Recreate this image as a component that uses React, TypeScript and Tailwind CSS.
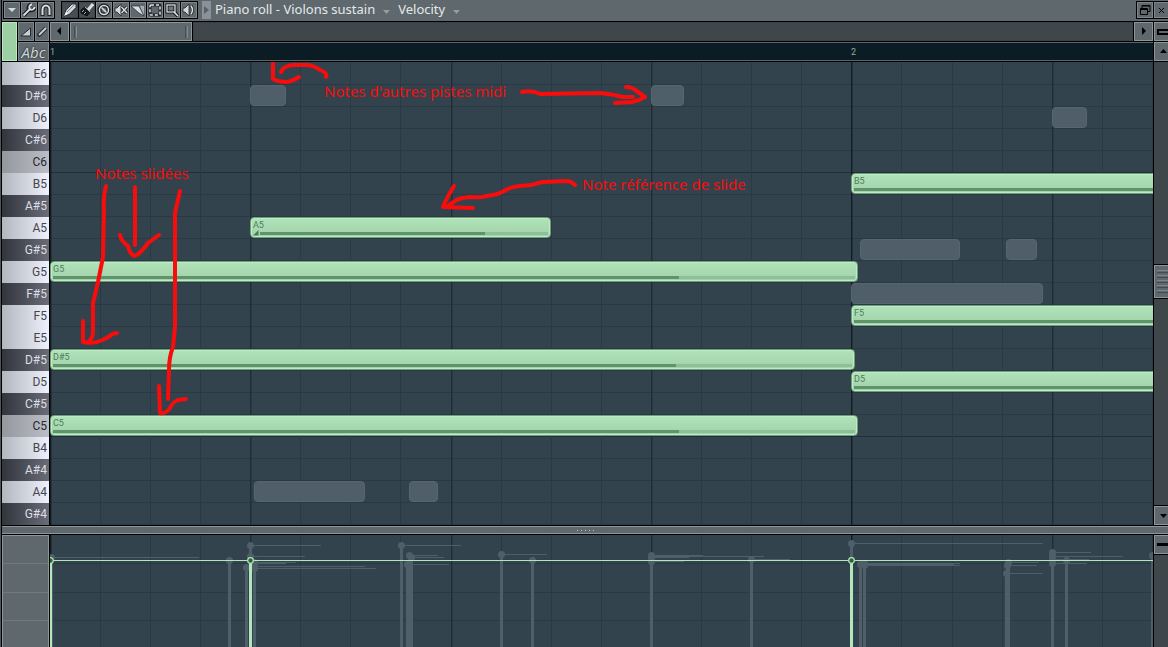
import { ReactNode } from 'react';

type Note = {
  key: string
  left: number
  width: number
  level: number
  slide?: boolean
};

type Ghost = {
  key: string
  left: number
  width: number
};

type Handle = {
  x: number
  y: number
  tail: number
};

const KEYS = [
  'E6', 'D#6', 'D6', 'C#6', 'C6', 'B5', 'A#5', 'A5', 'G#5', 'G5', 'F#5',
  'F5', 'E5', 'D#5', 'D5', 'C#5', 'C5', 'B4', 'A#4', 'A4', 'G#4',
];

const ROW = 22;
const STEP = 50.1;

const NOTES: Note[] = [
  { key: 'B5', left: 801, width: 1200, level: 1100 },
  {
    key: 'A5', left: 200, width: 301, level: 225, slide: true,
  },
  { key: 'G5', left: 0, width: 808, level: 626 },
  { key: 'F5', left: 801, width: 1200, level: 1100 },
  { key: 'D#5', left: 0, width: 805, level: 623 },
  { key: 'D5', left: 801, width: 1200, level: 1100 },
  { key: 'C5', left: 0, width: 808, level: 626 },
];

const GHOSTS: Ghost[] = [
  { key: 'D#6', left: 200, width: 36 },
  { key: 'D#6', left: 601, width: 33 },
  { key: 'D6', left: 1002, width: 35 },
  { key: 'G#5', left: 810, width: 100 },
  { key: 'G#5', left: 956, width: 31 },
  { key: 'F#5', left: 801, width: 192 },
  { key: 'A4', left: 204, width: 111 },
  { key: 'A4', left: 359, width: 29 },
];

const GHOST_HANDLES: Handle[] = [
  { x: 1, y: 22, tail: 148 },
  { x: 179, y: 25, tail: 0 },
  { x: 196, y: 32, tail: 0 },
  { x: 200, y: 10, tail: 71 },
  { x: 200, y: 21, tail: 55 },
  { x: 204, y: 27, tail: 42 },
  { x: 204, y: 28, tail: 32 },
  { x: 204, y: 31, tail: 111 },
  { x: 204, y: 33, tail: 122 },
  { x: 351, y: 10, tail: 60 },
  { x: 357, y: 29, tail: 42 },
  { x: 359, y: 20, tail: 29 },
  { x: 361, y: 22, tail: 33 },
  { x: 451, y: 19, tail: 46 },
  { x: 482, y: 25, tail: 0 },
  { x: 601, y: 20, tail: 52 },
  { x: 601, y: 21, tail: 113 },
  { x: 601, y: 22, tail: 38 },
  { x: 601, y: 26, tail: 33 },
  { x: 701, y: 24, tail: 39 },
  { x: 801, y: 8, tail: 192 },
  { x: 810, y: 29, tail: 94 },
  { x: 814, y: 28, tail: 96 },
  { x: 814, y: 30, tail: 96 },
  { x: 956, y: 38, tail: 37 },
  { x: 957, y: 30, tail: 30 },
  { x: 958, y: 27, tail: 31 },
  { x: 1002, y: 17, tail: 39 },
  { x: 1002, y: 21, tail: 71 },
  { x: 1002, y: 24, tail: 37 },
  { x: 1002, y: 28, tail: 35 },
  { x: 1016, y: 25, tail: 0 },
  { x: 1102, y: 20, tail: 0 },
];

const STROKES = [
  'M273 60L273 79Q279 82 287 82Q293 81 299 77',
  'M281 72Q283 66 293 65L308 65Q315 66 320 70Q328 73 326 77',
  'M522 92Q532 90 540 94L600 93Q612 94 623 97L633 97',
  'M626 87Q633 87 638 92L645 97Q638 101 632 102L615 103',
  'M575 185Q571 181 567 181L543 182Q537 183 532 185L520 186Q510 187 504 191Q497 195 487 196Q480 198 470 197Q459 198 455 201L448 206',
  'M454 186L447 198L443 207L473 208',
  'M106 186Q103 198 104 208L103 257L98 282L93 303L93 331Q93 338 89 341',
  'M83 321L83 342Q93 344 100 341Q108 338 111 335Q114 333 117 333',
  'M135 187L135 245',
  'M120 235Q121 241 128 246Q130 255 135 256Q140 254 148 243L159 235',
  'M180 191L175 213L175 327L173 347Q169 357 169 370L168 399',
  'M159 386L160 413Q166 414 170 408Q173 402 178 400L186 399',
];

function keyTone(name: string) {
  if (name.includes('#')) return 'from-[#32353c] to-[#6a6d78] text-[#dcdee6]';
  if (name.startsWith('C')) return 'from-[#94979c] to-[#bcbec8] text-[#26282e]';
  return 'from-[#b2b7be] to-[#eff1fc] text-[#43464e]';
}

function noteTop(name: string) {
  return 1 + KEYS.indexOf(name) * ROW;
}

function ToolButton({ label, active, children }: { label: string, active?: boolean, children?: ReactNode }) {
  return (
    <button
      type="button"
      aria-label={label}
      className={`flex h-4 w-4 shrink-0 items-center justify-center border ${active ? 'border-[#3e464b] bg-[#464e53]' : 'border-[#7d878b] bg-[#5f686d]'}`}
    >
      <svg width="14" height="14" viewBox="0 0 14 14" className="shrink-0" fill="none" stroke="#d9dee2">{children}</svg>
    </button>
  );
}

function ArrowButton({ label, path, className }: { label: string, path: string, className: string }) {
  return (
    <button
      type="button"
      aria-label={label}
      className={`flex h-[19px] shrink-0 items-center justify-center overflow-hidden border border-[#8c9598] bg-[#5f686d] ${className}`}
    >
      <svg width="9" height="9" viewBox="0 0 9 9" className="shrink-0"><path d={path} fill="#000" /></svg>
    </button>
  );
}

function TitleMenu({ children }: { children: ReactNode }) {
  return (
    <button type="button" className="flex items-center gap-2 whitespace-nowrap">
      {children}
      <svg width="7" height="4" viewBox="0 0 7 4" className="mt-1"><path d="M0 0H7L3.5 4Z" fill="#949ca2" /></svg>
    </button>
  );
}

function Toolbar() {
  return (
    <header className="flex h-[21px] shrink-0 items-start bg-[#5f686d] pt-px">
      <div className="ml-px flex gap-px bg-black p-px">
        <ToolButton label="Menu"><path d="M3 5H11L7 9Z" fill="#d3d8dc" stroke="none" /></ToolButton>
        <ToolButton label="Tools">
          <path d="M1.5 12.5L8 6" stroke="#15181a" strokeWidth="4" />
          <path d="M9 1.5A3.5 3.5 0 0 0 7 6.5A3.5 3.5 0 0 0 12.5 5" stroke="#15181a" strokeWidth="4" />
          <path d="M1.5 12.5L8 6" strokeWidth="2" />
          <path d="M10 1.5A2.7 2.7 0 0 0 8 6A2.7 2.7 0 0 0 12.5 4" strokeWidth="2" />
        </ToolButton>
        <ToolButton label="Snap">
          <path d="M3.5 13V6.5A3.5 4 0 0 1 10.5 6.5V13" stroke="#222" strokeWidth="4" />
          <path d="M3.5 12V6.5A3.5 4 0 0 1 10.5 6.5V12" strokeWidth="2" />
        </ToolButton>
      </div>
      <div className="ml-[6px] flex gap-px bg-black p-px">
        <ToolButton label="Draw" active>
          <path d="M1 13L3 7L9 1H13V5L7 11Z" fill="#d3d8dc" stroke="#15181a" strokeWidth=".8" />
          <path d="M4 9L11 2" stroke="#7b858b" />
          <path d="M6 11L12 5" stroke="#8d969b" />
          <path d="M1 13L3 9L5 11Z" fill="#fff" stroke="none" />
        </ToolButton>
        <ToolButton label="Paint" active>
          <path d="M8 7L13 1" strokeWidth="3" />
          <path d="M1 7L5 4L10 9L7 13L1 10Z" fill="#15181a" stroke="#111" />
          <path d="M5 4L10 9M2 9L4 7M4 11L6 9" stroke="#a6afb5" />
        </ToolButton>
        <ToolButton label="Delete">
          <circle cx="7" cy="7" r="4.5" stroke="#1c2022" strokeWidth="4" />
          <circle cx="7" cy="7" r="4.5" strokeWidth="1.5" />
          <path d="M4.5 4.5L9.5 9.5" strokeWidth="1.5" />
        </ToolButton>
        <ToolButton label="Mute">
          <path d="M1 5H3L7 1V13L3 9H1Z" fill="#d3d8dc" stroke="#222" strokeWidth=".8" />
          <path d="M7.5 4L13 10M13 4L7.5 10" stroke="#222" strokeWidth="3" />
          <path d="M7.5 4L13 10M13 4L7.5 10" strokeWidth="1.4" />
        </ToolButton>
        <ToolButton label="Slice">
          <path d="M0 3H8L13 13L8 10Z" fill="#d9dee2" stroke="#22282b" strokeWidth=".7" />
          <path d="M9 3H13V12Z" fill="#a7afb4" stroke="none" />
        </ToolButton>
        <ToolButton label="Select">
          <rect x="2" y="2" width="10" height="10" rx="1" stroke="#20282c" strokeWidth="3" />
          <rect x="2" y="2" width="10" height="10" rx="1" strokeDasharray="3 2" strokeWidth="1.5" />
        </ToolButton>
        <ToolButton label="Zoom">
          <rect x="2" y="2" width="8" height="7" fill="#70777b" stroke="#111" strokeWidth="3" />
          <path d="M9 9L13 13" stroke="#111" strokeWidth="3.5" />
          <rect x="2" y="2" width="8" height="7" strokeWidth="1.3" />
          <path d="M9 9L13 13" strokeWidth="1.7" />
        </ToolButton>
        <ToolButton label="Playback">
          <path d="M1 5H3L7 1V13L3 9H1Z" fill="#d3d8dc" stroke="#222" strokeWidth=".8" />
          <path d="M9 3Q12 7 9 11" stroke="#222" strokeWidth="3" />
          <path d="M9 3Q12 7 9 11" strokeWidth="1.5" />
        </ToolButton>
      </div>
      <button type="button" aria-label="Expand" className="ml-1 flex h-[18px] w-[9px] shrink-0 items-center justify-center bg-[#8a9199]">
        <svg width="5" height="8" viewBox="0 0 5 8"><path d="M0 0L5 4L0 8Z" fill="#596168" /></svg>
      </button>
      <h1 className="ml-1 flex min-w-0 flex-1 gap-2 overflow-hidden font-['Noto_Sans','Open_Sans',sans-serif] text-[13px] leading-[17px] text-[#e4e8ea]">
        <TitleMenu>Piano roll - Violons sustain</TitleMenu>
        <TitleMenu>Velocity</TitleMenu>
      </h1>
      <div className="flex shrink-0 gap-px bg-black py-px pl-px">
        <ToolButton label="Restore">
          <g stroke="#000">
            <path d="M4 5V2.5H12V8.5H10M4 3H12" />
            <path d="M2.5 5.5H9.5V11.5H2.5ZM2 6.5H10" />
          </g>
        </ToolButton>
        <button type="button" aria-label="Close" className="flex h-4 w-[14px] items-center justify-center border border-r-0 border-[#7d878b] bg-[#5f686d]">
          <svg width="7" height="7" viewBox="0 0 7 7"><path d="M1 1L6 6M6 1L1 6" stroke="#000" /></svg>
        </button>
      </div>
    </header>
  );
}

function TimeBar() {
  return (
    <div className="flex shrink-0 gap-px">
      <div className="flex w-[47px] shrink-0 gap-px">
        <div className="w-[15px] border border-[#b9e9bf] bg-[#9ccfa3]" />
        <div className="flex flex-1 flex-col gap-px">
          <div className="flex gap-px">
            <button type="button" aria-label="Slide" className="flex h-[19px] w-4 items-center justify-center border border-[#7d878b] bg-[#5f686d]">
              <svg width="12" height="10" viewBox="0 0 12 10"><path d="M1 9L10.5 1V9Z" fill="#c8ced2" stroke="#22282b" /></svg>
            </button>
            <button type="button" aria-label="Portamento" className="flex h-[19px] w-[14px] items-center justify-center border border-[#7d878b] bg-[#5f686d]">
              <svg width="11" height="10" viewBox="0 0 11 10">
                <path d="M1 9L9 1" stroke="#22282b" strokeWidth="4" />
                <path d="M2 8L9 1" stroke="#c8ced2" strokeWidth="2" />
              </svg>
            </button>
          </div>
          <button type="button" className="h-[19px] border border-[#7d878b] bg-[#5f686d] text-center font-['Open_Sans',sans-serif] text-[15px] leading-4 text-[#d3d8dc] italic [text-shadow:0_0_2px_#111]">
            Abc
          </button>
        </div>
      </div>
      <div className="flex min-w-0 flex-1 flex-col gap-px">
        <div className="flex gap-px">
          <ArrowButton label="Scroll left" path="M6 0V8L2 4Z" className="w-[19px]" />
          <div className="flex h-[19px] w-[122px] items-center justify-between border border-[#8c9598] bg-[#5f686d] px-[3px]">
            <span className="h-3 w-[3px] border-x border-x-[#464e53] border-r-[#828b90]" />
            <span className="h-3 w-[3px] border-x border-x-[#464e53] border-r-[#828b90]" />
          </div>
          <div className="flex-1 border border-[#394246] bg-[#40474b]" />
          <ArrowButton label="Scroll right" path="M3 0L7 4L3 8Z" className="w-[19px]" />
        </div>
        <div className="relative h-[19px] overflow-hidden border-y border-[#54646a] bg-[#0b1c25] font-['Roboto',sans-serif] text-[9px] leading-[18px] text-[#99a6ac]">
          <span className="absolute left-0">1</span>
          <span className="absolute left-[801px]">2</span>
        </div>
      </div>
      <div className="flex w-[14px] shrink-0 flex-col gap-px">
        <button type="button" aria-label="Zoom" className="flex h-[19px] items-center justify-end border border-r-0 border-[#8c9598] bg-[#5f686d]">
          <span className="h-[6px] w-[11px] border-2 border-r-0 border-black" />
        </button>
        <ArrowButton label="Scroll up" path="M1 6H8L4.5 2Z" className="w-full border-r-0 pl-1" />
      </div>
    </div>
  );
}

function GridColumns() {
  return (
    <>
      {Array.from({ length: 64 }, (_, i) => {
        const x = Math.floor(i * STEP + 0.2);
        let fill = '#2a3943';
        if (i % 4 === 0) fill = '#1f2d36';
        if (i % 16 === 0) fill = '#101d25';
        return (
          <g key={x} fill={fill}>
            <rect x={x} y="0" width="1" height="2000" />
            {i % 4 === 0 && <rect x={x + 1} y="0" width="1" height="2000" opacity="0.4" />}
          </g>
        );
      })}
    </>
  );
}

function Keyboard() {
  return (
    <div className="flex w-[47px] shrink-0 flex-col font-['Roboto',sans-serif] text-xs">
      {KEYS.map((name) => (
        <div
          key={name}
          className={`flex h-[22px] items-center justify-end bg-gradient-to-r pr-[2px] first:h-[23px] ${keyTone(name)}`}
        >
          {name}
        </div>
      ))}
    </div>
  );
}

function NoteBlock({ note }: { note: Note }) {
  return (
    <div
      className="absolute flex h-[21px] flex-col justify-between overflow-hidden rounded-[4px] border border-[#6f9d7c] bg-gradient-to-b from-[#b1e3ba] to-[#a0d1a9] pb-px shadow-[inset_0_0_0_1px_#b9efc0]"
      style={{ top: noteTop(note.key), left: note.left, width: note.width }}
    >
      <span className="pl-[2px] font-['Roboto',sans-serif] text-[9px] leading-[14px] text-[#4c7d5a]">{note.key}</span>
      <div className="mx-[2px] flex h-[4px] items-start gap-px">
        {note.slide && <svg width="6" height="6" viewBox="0 0 6 6" className="-mt-[2px] shrink-0"><path d="M0 5.5L5.5 0V5.5Z" fill="#4c7d5a" /></svg>}
        <div className="h-[3px] flex-1 bg-[#8fbf99]">
          <div className="h-full bg-[#60926c]" style={{ width: note.level }} />
        </div>
      </div>
    </div>
  );
}

function Annotations() {
  return (
    <div className="pointer-events-none absolute inset-0 font-['Noto_Sans','Open_Sans',sans-serif] text-[15px] leading-[18px] whitespace-nowrap text-[#f80c0c]">
      <svg className="absolute inset-0 h-full w-full" fill="none" stroke="#f80c0c" strokeWidth="4" strokeLinecap="round" strokeLinejoin="round">
        <g transform="translate(-50 -62)">
          {STROKES.map((d) => <path key={d} d={d} />)}
        </g>
      </svg>
      <p className="absolute top-[20px] left-[274px]">Notes d&apos;autres pistes midi</p>
      <p className="absolute top-[102px] left-[45px]">Notes slidées</p>
      <p className="absolute top-[113px] left-[532px]">Note référence de slide</p>
    </div>
  );
}

function Roll() {
  return (
    <div className="relative min-w-0 flex-1 overflow-hidden bg-[#33434d]">
      <svg className="absolute inset-0 h-full w-full" shapeRendering="crispEdges">
        {KEYS.map((name, i) => (
          <rect key={name} x="0" y={(i + 1) * ROW} width="100%" height="1" fill={name.startsWith('C') && !name.includes('#') ? '#1f2e37' : '#2a3943'} />
        ))}
        <GridColumns />
      </svg>
      {GHOSTS.map((ghost) => (
        <div
          key={`${ghost.key}-${ghost.left}`}
          className="absolute h-[21px] rounded-[4px] border border-[#56666f] bg-[#52626b]/90"
          style={{ top: noteTop(ghost.key), left: ghost.left, width: ghost.width }}
        />
      ))}
      {NOTES.map((note) => <NoteBlock key={note.key} note={note} />)}
      <Annotations />
    </div>
  );
}

function VerticalScroll() {
  return (
    <div className="flex w-[14px] shrink-0 flex-col gap-px">
      <div className="flex-[202] bg-[#40474b]" />
      <div className="flex h-[33px] flex-col justify-center gap-[2px] border border-r-0 border-[#8c9598] bg-[#5f686d] pl-[2px]">
        {[0, 1, 2, 3, 4].map((line) => <span key={line} className="h-[3px] border-y border-t-[#7d878b] border-b-[#434b50]" />)}
      </div>
      <div className="flex-[207] bg-[#40474b]" />
      <ArrowButton label="Scroll down" path="M1 3H8L4.5 7Z" className="w-full border-r-0 pl-1" />
    </div>
  );
}

function Splitter() {
  return (
    <div className="flex h-2 shrink-0 items-center justify-center gap-[3px] border-y border-[#8c9598] bg-[#5f686d]">
      {[0, 1, 2, 3, 4].map((dot) => <span key={dot} className="h-px w-px bg-[#b7c0c4]" />)}
    </div>
  );
}

function VelocityLane() {
  return (
    <div className="flex min-h-[113px] flex-1 gap-px">
      <div className="w-[47px] shrink-0 border border-b-0 border-[#8c9598] bg-[#5f686d]">
        <svg className="h-full w-full" shapeRendering="crispEdges">
          {[27, 56, 84].map((y) => <rect key={y} x="0" y={y} width="100%" height="1" fill="#707b81" />)}
        </svg>
      </div>
      <div className="relative min-w-0 flex-1 overflow-hidden bg-[#33434d]">
        <svg className="absolute inset-0 h-full w-full">
          <g shapeRendering="crispEdges">
            {[28, 57, 85].map((y) => <rect key={y} x="0" y={y} width="100%" height="1" fill="#2a3943" />)}
            <GridColumns />
          </g>
          <g fill="#4e5f69">
            {GHOST_HANDLES.map(({ x, y, tail }) => (
              <g key={`${x}-${y}`}>
                <rect x={x - 1} y={y} width="3" height="2000" />
                <rect x={x} y={y} width={tail} height="1" />
                <circle cx={x + 0.5} cy={y + 0.5} r="3.5" />
              </g>
            ))}
          </g>
          <rect x="0" y="25" width="100%" height="1" fill="#b4e6bd" />
          {[0, 200, 801].map((x) => (
            <g key={x}>
              <rect x={x - 1} y="25" width="3" height="2000" fill="#b4e6bd" />
              <circle cx={x + 0.5} cy="25.5" r="2.8" fill="#2c6237" stroke="#b4e6bd" strokeWidth="1.2" />
            </g>
          ))}
        </svg>
      </div>
      <div className="flex w-[14px] shrink-0 flex-col gap-px">
        <button type="button" aria-label="Resize lane" className="flex h-[19px] items-center justify-end border border-r-0 border-[#8c9598] bg-[#5f686d]">
          <span className="h-[3px] w-[11px] bg-black" />
        </button>
        <div className="flex-1 bg-[#40474b]" />
      </div>
    </div>
  );
}

function App() {
  return (
    <div className="flex h-screen flex-col gap-px overflow-hidden border-l border-[#4d575c] bg-black pl-px">
      <Toolbar />
      <TimeBar />
      <div className="flex shrink-0 gap-px">
        <Keyboard />
        <Roll />
        <VerticalScroll />
      </div>
      <Splitter />
      <VelocityLane />
    </div>
  );
}

export default App;
